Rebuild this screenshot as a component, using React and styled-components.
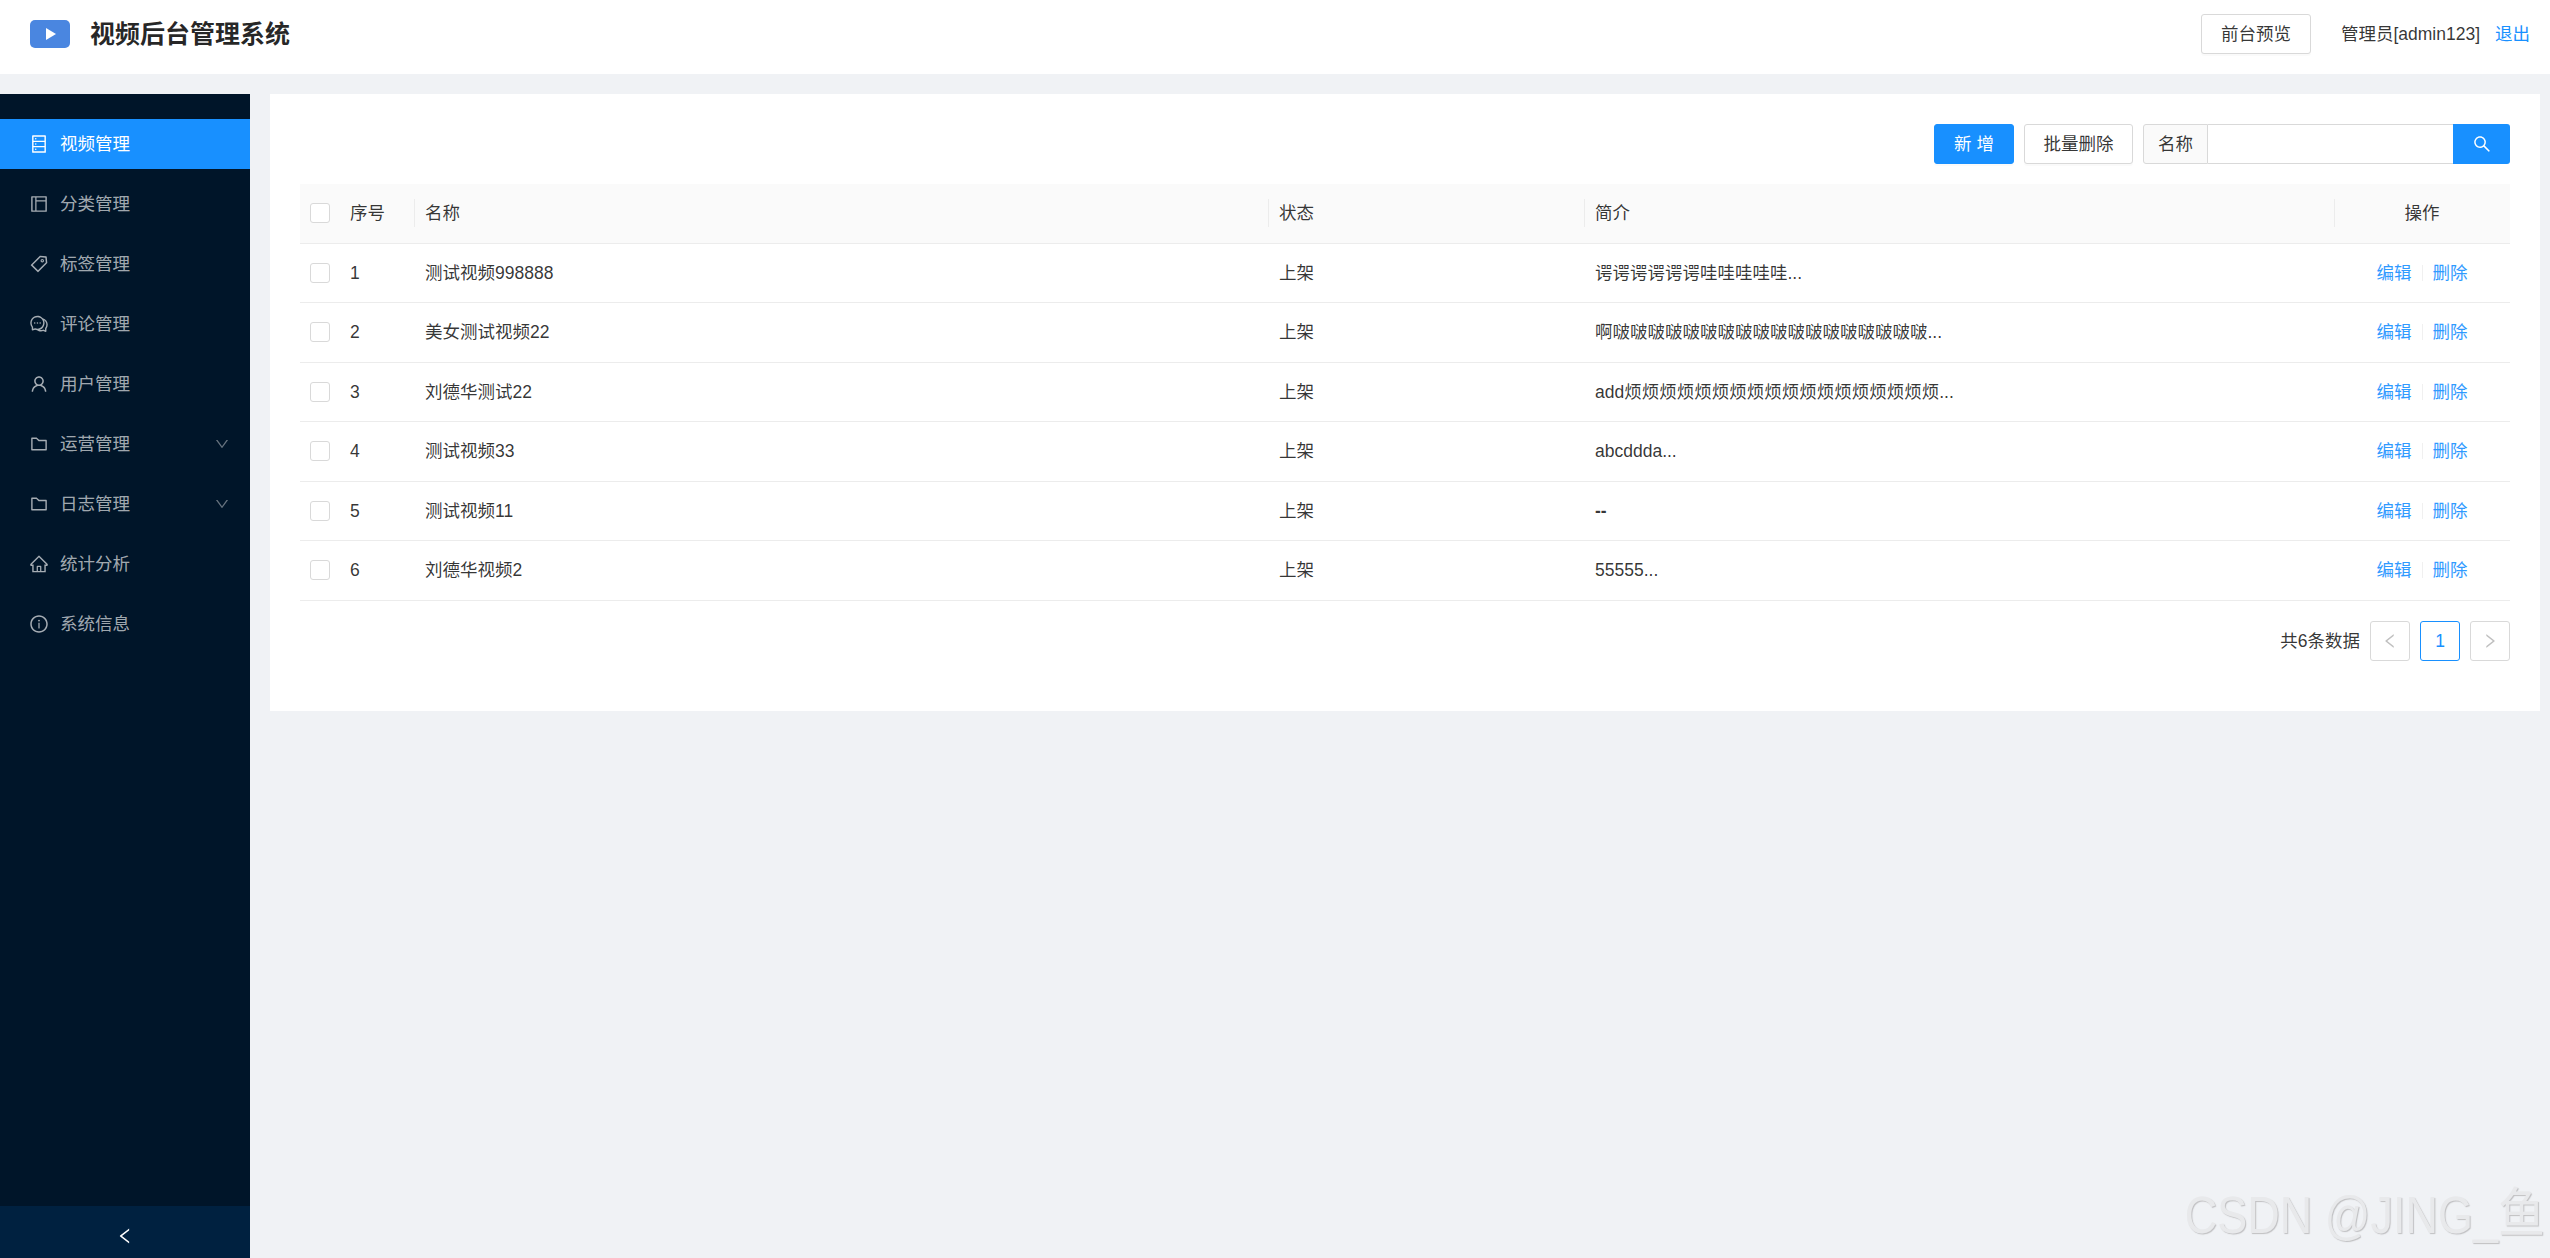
import React from "react";
import styled, { createGlobalStyle } from "styled-components";
import {
  AiOutlineDatabase,
  AiOutlineLayout,
  AiOutlineTag,
  AiOutlineComment,
  AiOutlineUser,
  AiOutlineFolder,
  AiOutlineHome,
  AiOutlineInfoCircle,
  AiOutlineDown,
  AiOutlineLeft,
  AiOutlineRight,
  AiOutlineSearch,
} from "react-icons/ai";

const Global = createGlobalStyle`
  html, body { margin: 0; padding: 0; height: 100%; }
  body {
    background: #f0f2f5;
    font-family: "Liberation Sans", "Noto Sans CJK SC", sans-serif;
    font-size: 17.5px;
    line-height: 26px;
    color: rgba(0, 0, 0, 0.8);
    overflow: hidden;
  }
  * { box-sizing: border-box; }
`;

const Page = styled.div`
  position: relative;
  width: 2550px;
  height: 1258px;
  display: flex;
  flex-direction: column;
  overflow: hidden;
`;

const TopBar = styled.header`
  height: 74px;
  flex: none;
  background: #fff;
  display: flex;
  align-items: center;
  padding: 0 20px 6px 30px;
`;

const Brand = styled.div`
  display: flex;
  align-items: center;
  gap: 20px;
  flex: 1;
`;

const BrandTitle = styled.h1`
  margin: 0;
  font-size: 25px;
  line-height: 34px;
  font-weight: 700;
  color: rgba(0, 0, 0, 0.85);
`;

const Btn = styled.button`
  height: 40px;
  padding: 0;
  width: ${(p) => p.$w}px;
  font: inherit;
  border-radius: 3px;
  border: 1px solid ${(p) => (p.$primary ? "#1890ff" : "#d9d9d9")};
  background: ${(p) => (p.$primary ? "#1890ff" : "#fff")};
  color: ${(p) => (p.$primary ? "#fff" : "rgba(0,0,0,.8)")};
  box-shadow: 0 2px 0 rgba(0, 0, 0, 0.02);
`;

const UserName = styled.span`
  margin-left: 30px;
  white-space: nowrap;
`;

const Logout = styled.a`
  margin-left: 15px;
  color: #1890ff;
`;

const Body = styled.div`
  flex: 1;
  margin-top: 20px;
  display: flex;
  min-height: 0;
`;

const Sider = styled.aside`
  width: 250px;
  flex: none;
  background: #001529;
  display: flex;
  flex-direction: column;
`;

const Menu = styled.nav`
  flex: 1;
  padding-top: 25px;
  display: flex;
  flex-direction: column;
  gap: 10px;
`;

const MenuItem = styled.div`
  height: 50px;
  padding: 0 20px 0 30px;
  display: flex;
  align-items: center;
  gap: 12.5px;
  background: ${(p) => (p.$active ? "#1890ff" : "transparent")};
  color: ${(p) => (p.$active ? "#fff" : "rgba(255,255,255,.65)")};
  > svg { font-size: 20px; flex: none; margin: 0 -1.25px; }
`;

const MenuLabel = styled.span`
  flex: 1;
`;

const Caret = styled.span`
  display: flex;
  color: rgba(255, 255, 255, 0.4);
  svg { font-size: 16px; }
`;

const Collapse = styled.div`
  height: 52px;
  flex: none;
  padding-top: 7px;
  background: #002140;
  color: #fff;
  display: flex;
  align-items: center;
  justify-content: center;
  svg { font-size: 20px; }
`;

const Card = styled.main`
  width: 2270px;
  margin-left: 20px;
  align-self: flex-start;
  background: #fff;
  padding: 30px 30px 50px;
`;

const Toolbar = styled.div`
  display: flex;
  justify-content: flex-end;
  gap: 10px;
  margin-bottom: 20px;
`;

const SearchGroup = styled.div`
  display: flex;
  height: 40px;
`;

const Addon = styled.span`
  width: 65px;
  display: flex;
  align-items: center;
  justify-content: center;
  background: #fafafa;
  border: 1px solid #d9d9d9;
  border-radius: 3px 0 0 3px;
`;

const SearchInput = styled.input`
  width: 245px;
  border: 1px solid #d9d9d9;
  border-left: 0;
  border-right: 0;
  outline: none;
  padding: 0 10px;
  font: inherit;
`;

const SearchBtn = styled.button`
  width: 57px;
  border: 0;
  padding: 0;
  background: #1890ff;
  color: #fff;
  border-radius: 0 3px 3px 0;
  display: flex;
  align-items: center;
  justify-content: center;
  svg { font-size: 20px; }
`;

const Row = styled.div`
  display: grid;
  grid-template-columns: 40px 74px 854px 316px 750px 176px;
  height: 59.5px;
  align-items: center;
  border-bottom: 1px solid #ececec;
  background: ${(p) => (p.$head ? "#fafafa" : "#fff")};
`;

const Cell = styled.div`
  position: relative;
  height: 100%;
  display: flex;
  align-items: center;
  padding-left: ${(p) => p.$pl ?? 11}px;
  justify-content: ${(p) => (p.$center ? "center" : "flex-start")};
  font-weight: ${(p) => (p.$strong ? 700 : 400)};
  white-space: nowrap;
  ${(p) =>
    p.$sep &&
    `&::before {
      content: "";
      position: absolute;
      left: 0;
      top: 15px;
      width: 1px;
      height: 28px;
      background: #ececec;
    }`}
`;

const Check = styled.span`
  width: 20px;
  height: 20px;
  background: #fff;
  border: 1px solid #d9d9d9;
  border-radius: 3px;
  display: block;
`;

const OpLink = styled.a`
  color: #1890ff;
  opacity: 0.9;
`;

const OpDivider = styled.span`
  width: 1px;
  height: 16px;
  margin: 0 10px;
  background: #f0f0f0;
`;

const Pager = styled.div`
  margin-top: 20.5px;
  display: flex;
  align-items: center;
  justify-content: flex-end;
  gap: 10px;
`;

const PageBox = styled.span`
  width: 40px;
  height: 40px;
  border-radius: 3px;
  display: flex;
  align-items: center;
  justify-content: center;
  border: 1px solid ${(p) => (p.$active ? "#1890ff" : "#d9d9d9")};
  color: ${(p) => (p.$active ? "#1890ff" : "rgba(0,0,0,.25)")};
  svg { font-size: 18px; }
`;

const Watermark = styled.div`
  position: absolute;
  right: 5px;
  top: 1187px;
  font-size: 45px;
  line-height: 56px;
  white-space: nowrap;
  color: #e8e9eb;
  text-shadow: 1px 1px 1px #bfbfc1;
  transform: scaleY(1.15);
  transform-origin: right center;
`;

const WatermarkHan = styled.span`
  font-size: 47px;
`;

const Logo = () => (
  <svg width="40" height="28" viewBox="0 0 40 28" aria-hidden="true">
    <rect width="40" height="28" rx="5" fill="#4a86e0" />
    <path d="M16 8v12l10-6z" fill="#fff" />
  </svg>
);

const menu = [
  [AiOutlineDatabase, "视频管理"],
  [AiOutlineLayout, "分类管理"],
  [AiOutlineTag, "标签管理"],
  [AiOutlineComment, "评论管理"],
  [AiOutlineUser, "用户管理"],
  [AiOutlineFolder, "运营管理", true],
  [AiOutlineFolder, "日志管理", true],
  [AiOutlineHome, "统计分析"],
  [AiOutlineInfoCircle, "系统信息"],
];

const rows = [
  ["测试视频998888", "谔谔谔谔谔谔哇哇哇哇哇..."],
  ["美女测试视频22", "啊啵啵啵啵啵啵啵啵啵啵啵啵啵啵啵啵啵啵..."],
  ["刘德华测试22", "add烦烦烦烦烦烦烦烦烦烦烦烦烦烦烦烦烦烦..."],
  ["测试视频33", "abcddda..."],
  ["测试视频11", "--"],
  ["刘德华视频2", "55555..."],
];

export default function App() {
  return (
    <Page>
      <Global />
      <TopBar>
        <Brand>
          <Logo />
          <BrandTitle>视频后台管理系统</BrandTitle>
        </Brand>
        <Btn $w={110}>前台预览</Btn>
        <UserName>管理员[admin123]</UserName>
        <Logout>退出</Logout>
      </TopBar>
      <Body>
        <Sider>
          <Menu>
            {menu.map(([Icon, label, sub], i) => (
              <MenuItem key={label} $active={i === 0}>
                <Icon />
                <MenuLabel>{label}</MenuLabel>
                {sub && (
                  <Caret>
                    <AiOutlineDown />
                  </Caret>
                )}
              </MenuItem>
            ))}
          </Menu>
          <Collapse>
            <AiOutlineLeft />
          </Collapse>
        </Sider>
        <Card>
          <Toolbar>
            <Btn $primary $w={80}>新 增</Btn>
            <Btn $w={109}>批量删除</Btn>
            <SearchGroup>
              <Addon>名称</Addon>
              <SearchInput />
              <SearchBtn>
                <AiOutlineSearch />
              </SearchBtn>
            </SearchGroup>
          </Toolbar>
          <Row $head>
            <Cell $pl={10}><Check /></Cell>
            <Cell $pl={10}>序号</Cell>
            <Cell $sep>名称</Cell>
            <Cell $sep>状态</Cell>
            <Cell $sep>简介</Cell>
            <Cell $sep $center $pl={0}>操作</Cell>
          </Row>
          {rows.map(([name, intro], i) => (
            <Row key={name}>
              <Cell $pl={10}><Check /></Cell>
              <Cell $pl={10}>{i + 1}</Cell>
              <Cell>{name}</Cell>
              <Cell>上架</Cell>
              <Cell $strong={intro === "--"}>{intro}</Cell>
              <Cell $center $pl={0}>
                <OpLink>编辑</OpLink>
                <OpDivider />
                <OpLink>删除</OpLink>
              </Cell>
            </Row>
          ))}
          <Pager>
            <span>共6条数据</span>
            <PageBox><AiOutlineLeft /></PageBox>
            <PageBox $active>1</PageBox>
            <PageBox><AiOutlineRight /></PageBox>
          </Pager>
        </Card>
      </Body>
      <Watermark>CSDN @JING_<WatermarkHan>鱼</WatermarkHan></Watermark>
    </Page>
  );
}
